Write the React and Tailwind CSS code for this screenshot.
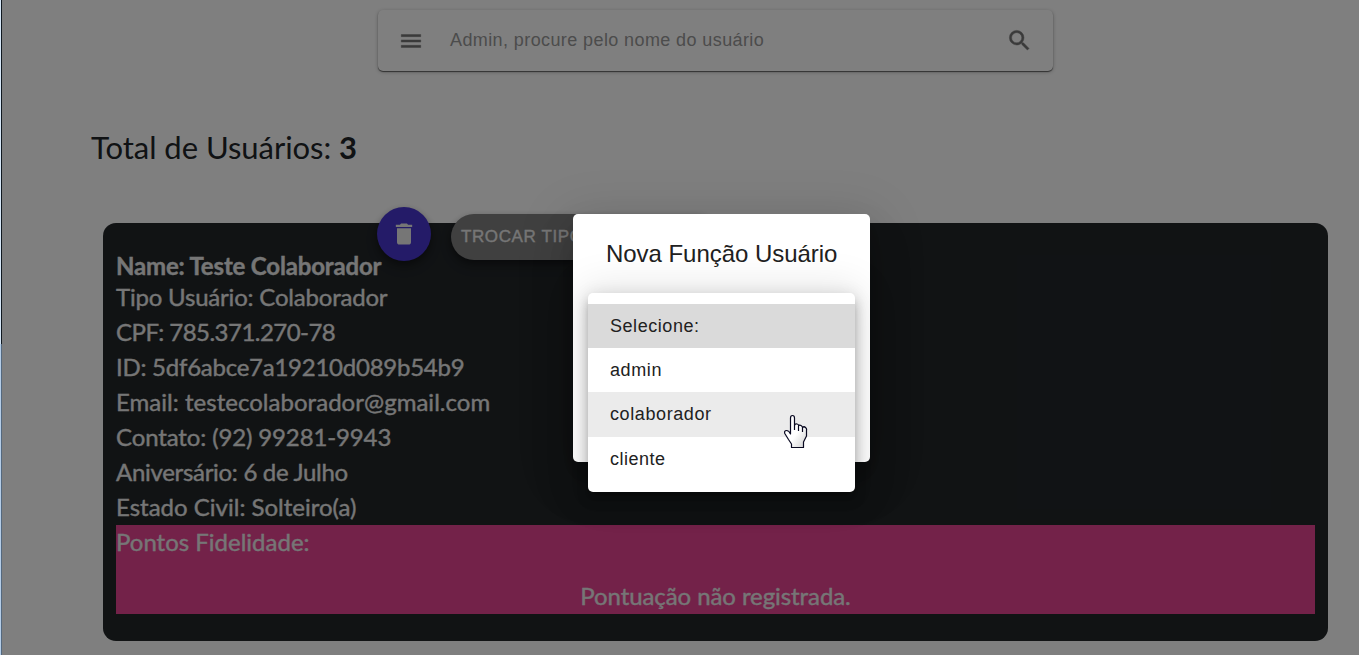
import React from "react";

const rows = [
  { text: "Tipo Usuário: Colaborador", cls: "tracking-[-0.2px]" },
  { text: "CPF: 785.371.270-78", cls: "tracking-[-0.53px]" },
  { text: "ID: 5df6abce7a19210d089b54b9", cls: "tracking-[-0.25px]" },
  { text: "Email: testecolaborador@gmail.com", cls: "tracking-[0.03px]" },
  { text: "Contato: (92) 99281-9943", cls: "tracking-[-0.13px]" },
  { text: "Aniversário: 6 de Julho", cls: "tracking-[-0.3px]" },
  { text: "Estado Civil: Solteiro(a)", cls: "tracking-[0px]" },
];

const options = [
  { text: "Selecione:", cls: "h-11 bg-[#dadada] tracking-[0.55px]" },
  { text: "admin", cls: "h-11 tracking-[0.6px]" },
  { text: "colaborador", cls: "h-[45px] bg-[#ebebeb] pb-px tracking-[0.6px]" },
  { text: "cliente", cls: "h-11 tracking-[0.5px]" },
];

function Icon({ d, className }) {
  return (
    <svg viewBox="0 0 24 24" fill="currentColor" className={className}>
      <path d={d} />
    </svg>
  );
}

function SearchBar() {
  return (
    <div className="ml-[378px] flex h-[61px] w-[675px] items-center rounded-[5px] pl-5 pr-5 text-[#757575] shadow-[0_1px_1px_rgba(0,0,0,0.55),0_1px_4px_rgba(0,0,0,0.25)]">
      <Icon
        className="size-[26px] shrink-0 stroke-current stroke-[0.4]"
        d="M3 18h18v-2H3v2zm0-5h18v-2H3v2zm0-7v2h18V6H3z"
      />
      <span className="ml-[26px] flex-1 text-[18px] tracking-[0.4px] text-[#989898]">
        Admin, procure pelo nome do usuário
      </span>
      <Icon
        className="size-[27px] shrink-0 stroke-current stroke-[0.4]"
        d="M15.5 14h-.79l-.28-.27A6.471 6.471 0 0 0 16 9.5 6.5 6.5 0 1 0 9.5 16c1.61 0 3.09-.59 4.23-1.57l.27.28v.79l5 4.99L20.49 19l-4.99-5zm-6 0C7.01 14 5 11.99 5 9.5S7.01 5 9.5 5 14 7.01 14 9.5 11.99 14 9.5 14z"
      />
    </div>
  );
}

function UserCard() {
  return (
    <section className="relative ml-[103px] mt-[50px] h-[418px] w-[1225px] rounded-[13px] bg-[#222629] px-[13px] pt-7 font-[Lato,sans-serif] text-[24px] text-[#ececec] [-webkit-text-stroke:0.35px_currentColor]">
      <h2 className="flex h-[29px] items-center font-bold tracking-[-0.17px]">
        <span>Name: Teste Colaborador</span>
      </h2>
      {rows.map((r) => (
        <p key={r.text} className="flex h-[35px] items-center whitespace-nowrap pb-0.5">
          <span className={r.cls}>{r.text}</span>
        </p>
      ))}
      <div className="flex h-[89px] flex-col justify-between bg-[#e64493]">
        <p className="h-[35px] leading-[33px]">Pontos Fidelidade:</p>
        <p className="h-[35px] text-center leading-[33px] tracking-[-0.08px]">
          Pontuação não registrada.
        </p>
      </div>
      <button className="absolute left-[274px] top-[-16px] flex size-[54px] items-center justify-center rounded-full bg-[#4836d0] pb-px pr-px shadow-[0_3px_6px_rgba(0,0,0,0.3),0_6px_12px_rgba(0,0,0,0.2)]">
        <Icon className="size-[28px]" d="M6 19c0 1.100.9 2 2 2h8c1.100 0 2-.9 2-2V7H6v12zM19 4h-3.500l-1-1h-5l-1 1H5v2h14V4z" />
      </button>
      <button className="absolute left-[348px] top-[-9px] flex h-[46px] w-[270px] items-center whitespace-nowrap rounded-full bg-[#808080] pl-[10px] font-['Liberation_Sans',sans-serif] text-[17px] font-medium tracking-[0.6px] shadow-[0_3px_6px_rgba(0,0,0,0.3),0_6px_12px_rgba(0,0,0,0.2)]">
        TROCAR TIPO
      </button>
    </section>
  );
}

function SelectMenu() {
  return (
    <ul className="absolute left-[15px] top-[79px] h-[199px] w-[267px] overflow-visible rounded-[5px] bg-white pt-[11px] text-[18px] text-[#212121] shadow-[0_6px_6px_-3px_rgba(0,0,0,0.2),0_9px_11px_1px_rgba(0,0,0,0.14),0_3px_16px_2px_rgba(0,0,0,0.12),0_0_40px_6px_rgba(0,0,0,0.1)]">
      {options.map((o) => (
        <li key={o.text} className={"flex items-center pl-[22px] " + o.cls}>
          {o.text}
        </li>
      ))}
    </ul>
  );
}

function HandPointer() {
  return (
    <svg viewBox="0 0 24 34" className="absolute left-[211px] top-[200px] h-[34px] w-6">
      <defs>
        <linearGradient id="hand" x1="0" y1="0" x2="1" y2="1">
          <stop offset="0.55" stopColor="#fff" />
          <stop offset="1" stopColor="#ccc" />
        </linearGradient>
      </defs>
      <path
        d="M6.500 18.500V4Q6.500 1.500 8.500 1.500T10.500 4V11.500Q11 9.500 13 10T14.500 12Q15.500 10.500 17 11.500T18.500 13.500Q20 12 21.500 13.500T22.500 16V22L19.500 28V33.500H7.500V30L4.500 25.500L.8 19.500Q0 16.500 2.500 16.500T6.500 20V18.500M10.500 11V16M14.500 12V17M18.500 13.500V18"
        fill="url(#hand)"
        stroke="#080820"
        strokeWidth="1.2"
        strokeLinejoin="round"
      />
    </svg>
  );
}

export default function App() {
  return (
    <div className="relative h-[655px] w-[1359px] overflow-hidden bg-white font-['Liberation_Sans',Arial,sans-serif]">
      <div className="pt-[10px]">
        <SearchBar />
        <h1 className="ml-[91px] mt-[56px] h-[46px] font-[Lato,sans-serif] text-[31px] leading-[40px] tracking-[-0.04px] text-[#212529]">
          Total de Usuários: <b>3</b>
        </h1>
        <UserCard />
      </div>

      <div className="absolute inset-0 flex justify-center bg-black/50 pt-[214px]">
        <div className="relative ml-[84px] h-[248px] w-[297px] rounded-[5px] bg-white pt-[24px] shadow-[0_12px_17px_-8px_rgba(0,0,0,0.2),0_26px_42px_3px_rgba(0,0,0,0.14),0_10px_51px_9px_rgba(0,0,0,0.12)]">
          <h2 className="ml-[33px] whitespace-nowrap text-[24px] leading-[32px] tracking-[-0.04px] text-[#212121]">
            Nova Função Usuário
          </h2>
          <SelectMenu />
          <HandPointer />
        </div>
      </div>

      <div className="absolute left-0 top-0 flex h-full w-[2px] flex-col">
        <div className="h-[344px] border-r border-[#101820] bg-[#d7e8f8]" />
        <div className="flex-1 border-r border-[#54687e] bg-[#b4cde8]" />
      </div>
    </div>
  );
}
